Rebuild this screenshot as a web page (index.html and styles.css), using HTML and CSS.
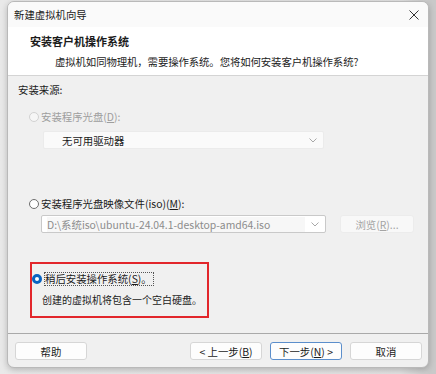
FILE: index.html
```html
<!DOCTYPE html>
<html lang="zh-CN">
  <head>
    <meta charset="UTF-8" />
    <title>新建虚拟机向导</title>
    <link rel="stylesheet" href="styles.css">
  </head>
  <body>
    <div class="window">
      <div class="titlebar">
        <span class="title">新建虚拟机向导</span>
        <svg class="close" viewBox="0 0 10 10">
          <path d="M0.5 0.5 L9.5 9.5 M9.5 0.5 L0.5 9.5" />
        </svg>
      </div>

      <div class="header">
        <div class="header-title">安装客户机操作系统</div>
        <div class="header-sub">虚拟机如同物理机，需要操作系统。您将如何安装客户机操作系统?</div>
      </div>

      <div class="content">
        <div class="section-label">安装来源:</div>

        <div class="option disabled">
          <span class="radio"></span>
          <span class="option-text">安装程序光盘(<u>D</u>):</span>
        </div>
        <div class="combo combo-drive">
          <span class="combo-text">无可用驱动器</span>
          <svg class="chevron" viewBox="0 0 8 5"><path d="M0.5 0.5 L4 4 L7.5 0.5" /></svg>
        </div>

        <div class="option option-iso">
          <span class="radio"></span>
          <span class="option-text">安装程序光盘映像文件(iso)(<u>M</u>):</span>
        </div>
        <div class="iso-row">
          <div class="combo combo-iso">
            <span class="combo-text">D:\系统iso\ubuntu-24.04.1-desktop-amd64.iso</span>
            <svg class="chevron" viewBox="0 0 8 5"><path d="M0.5 0.5 L4 4 L7.5 0.5" /></svg>
          </div>
          <button class="btn btn-browse" disabled>浏览(<u>R</u>)...</button>
        </div>

        <div class="highlight">
          <div class="option checked">
            <span class="radio"></span>
            <span class="option-text focus">稍后安装操作系统(<u>S</u>)。</span>
          </div>
          <div class="note">创建的虚拟机将包含一个空白硬盘。</div>
        </div>
      </div>

      <div class="footer">
        <button class="btn">帮助</button>
        <div class="footer-right">
          <button class="btn">&lt; 上一步(<u>B</u>)</button>
          <button class="btn btn-default">下一步(<u>N</u>) &gt;</button>
          <button class="btn">取消</button>
        </div>
      </div>
    </div>
  </body>
</html>
```

FILE: styles.css
```css
* {
  margin: 0;
  padding: 0;
  box-sizing: border-box;
}

body {
  font-family: "Noto Sans CJK SC", "Noto Sans", sans-serif;
  font-size: 10.4px;
  color: #1b1b1b;
  background: linear-gradient(90deg, #e9e9e9 0, #e2e2e2 400px, #c9c9c9 430px);
  width: 436px;
  height: 374px;
  padding: 1px 0 0 7px;
  overflow: hidden;
}

.window {
  width: 422px;
  height: 367px;
  background-color: #f0f0f0;
  border: 1px solid #b9b9b9;
  border-radius: 7px;
  overflow: hidden;
  display: flex;
  flex-direction: column;
  box-shadow: 0 2px 6px rgba(0, 0, 0, 0.22);
}

.titlebar {
  height: 25px;
  flex-shrink: 0;
  background-color: #fafafa;
  display: flex;
  align-items: center;
  justify-content: space-between;
  padding: 0 9px 0 6px;
}

.title {
  line-height: 14px;
}

.close {
  width: 10px;
  height: 10px;
  fill: none;
  stroke: #333;
  stroke-width: 1;
}

.header {
  height: 49px;
  flex-shrink: 0;
  background-color: #fff;
  border-bottom: 1px solid #d4d4d4;
  padding: 7px 0 0 22px;
}

.header-title {
  font-size: 11px;
  font-weight: bold;
  line-height: 15px;
}

.header-sub {
  line-height: 14px;
  margin-top: 6px;
  padding-left: 25px;
  letter-spacing: -0.1px;
}

.content {
  flex: 1;
  padding: 6px 0 0 10px;
}

.section-label {
  line-height: 15px;
}

.option {
  display: flex;
  align-items: center;
  gap: 2px;
  height: 15px;
  margin-top: 12px;
  margin-left: 11px;
}

.radio {
  width: 10px;
  height: 10px;
  border-radius: 50%;
  border: 1px solid #6e6e6e;
  background-color: #fff;
  flex-shrink: 0;
}

.disabled .radio {
  border-color: #d2d2d2;
  background-color: #f6f6f6;
}

.disabled .option-text {
  color: #9e9e9e;
}

.checked .radio {
  border: 3px solid #0a64c2;
}

.combo {
  height: 18px;
  display: flex;
  align-items: center;
  justify-content: space-between;
  padding: 0 6px 0 5px;
  background-color: #fafafa;
  border: 1px solid #ebebeb;
  border-radius: 2px;
}

.combo-drive {
  width: 281px;
  margin: 7px 0 0 25px;
  padding-left: 18px;
}

.chevron {
  width: 8px;
  height: 5px;
  fill: none;
  stroke: #a8a8a8;
  stroke-width: 1;
}

.option-iso {
  margin-top: 47px;
}

.iso-row {
  display: flex;
  gap: 14px;
  margin: 4px 0 0 23px;
}

.combo-iso {
  width: 285px;
  border-color: #c9c9c9;
  background-color: #fff;
  padding-left: 5px;
}

.combo-iso .combo-text {
  color: #8c8c8c;
  background-color: #f7f7f7;
  flex: 1;
  margin-right: 6px;
}

.btn {
  width: 72px;
  height: 18px;
  font-family: inherit;
  font-size: 10.4px;
  color: #1b1b1b;
  background-color: #fdfdfd;
  border: 1px solid #d6d6d6;
  border-radius: 3px;
}

.btn-browse {
  width: 74px;
  color: #a4a4a4;
  background-color: #f8f8f8;
  border-color: #ececec;
}

.highlight {
  width: 179px;
  height: 56px;
  margin: 29px 0 0 12px;
  border: 2px solid #e2262b;
  padding-top: 8px;
}

.highlight .option {
  margin: 0;
  height: 14px;
}

.focus {
  outline: 1px dotted #555;
  outline-offset: -1px;
  padding: 0 2px 0 1px;
  line-height: 14px;
}

.note {
  line-height: 14px;
  margin: 7px 0 0 10px;
  white-space: nowrap;
  font-size: 10px;
}

.footer {
  height: 34px;
  flex-shrink: 0;
  border-top: 1px solid #a9a9a9;
  display: flex;
  justify-content: space-between;
  padding: 8px 6px 0 7px;
}

.footer-right {
  display: flex;
  gap: 8px;
}

.btn-default {
  border-color: #5b8ecb;
}
```
